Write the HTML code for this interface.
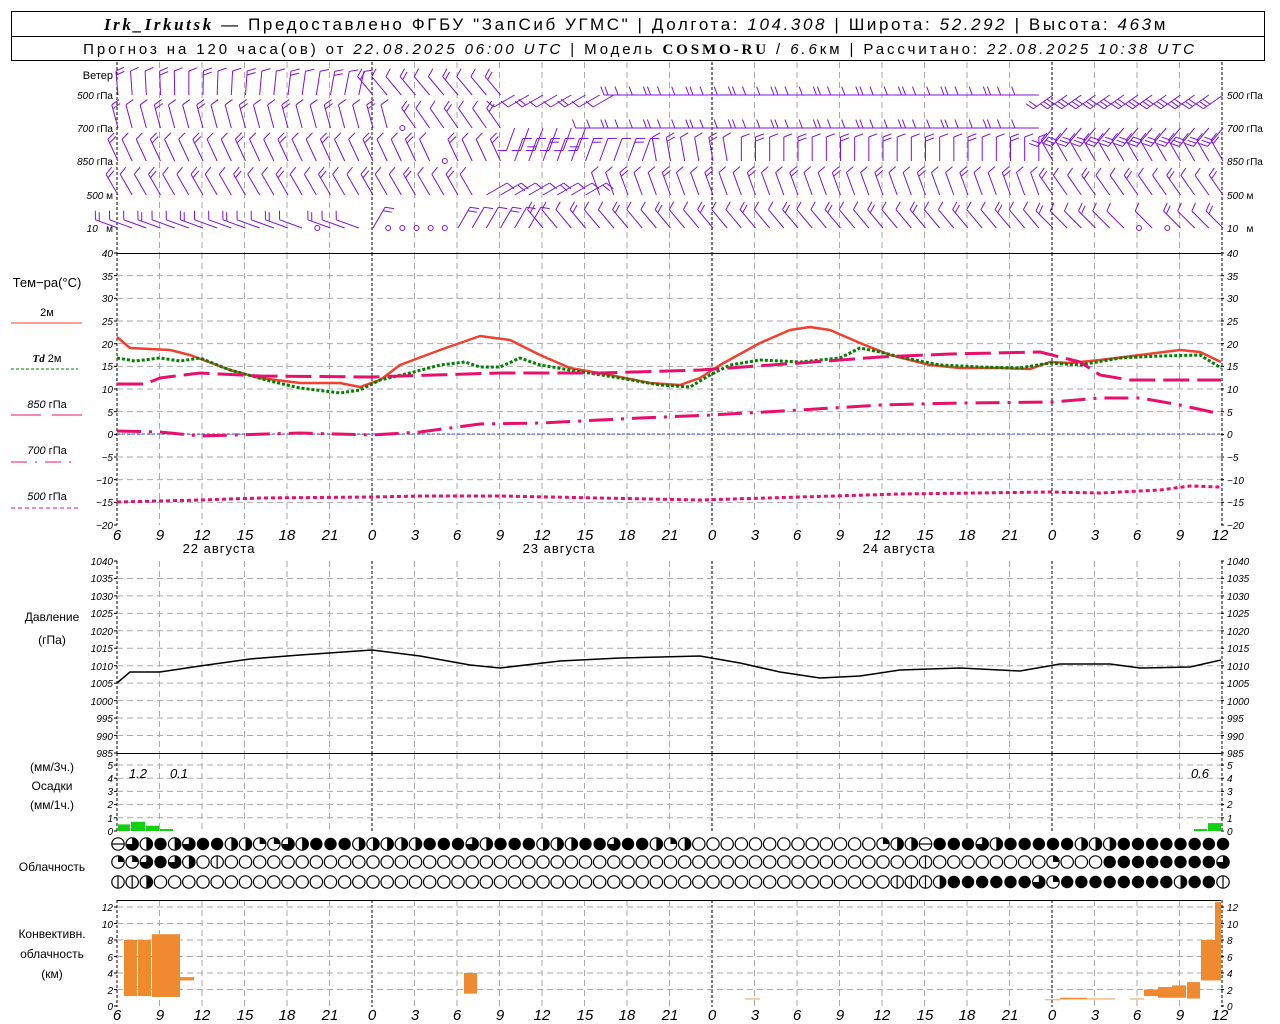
<!DOCTYPE html>
<html><head><meta charset="utf-8"><style>
html,body{margin:0;padding:0;background:#fff;width:1280px;height:1024px;overflow:hidden}
svg{display:block;font-family:"Liberation Sans",sans-serif}
.ax{font-size:10px;font-style:italic;fill:#000}
.hl{font-size:15px;font-style:italic}
.lb{font-size:12px;text-anchor:middle}
</style></head><body>
<svg id="s" width="1280" height="1024" viewBox="0 0 1280 1024" xmlns="http://www.w3.org/2000/svg">
<rect x="11.5" y="11.5" width="1253" height="49" fill="none" stroke="#000"/>
<line x1="11" y1="36.5" x2="1265" y2="36.5" stroke="#000"/>
<text x="636" y="30" text-anchor="middle" font-size="17" letter-spacing="2.6"><tspan font-family="Liberation Serif" font-style="italic" font-weight="bold">Irk_Irkutsk</tspan> — Предоставлено ФГБУ "ЗапСиб УГМС" | Долгота: <tspan font-style="italic">104.308</tspan> | Широта: <tspan font-style="italic">52.292</tspan> | Высота: <tspan font-style="italic">463</tspan>м</text>
<text x="640" y="54" text-anchor="middle" font-size="15" letter-spacing="2.9">Прогноз на 120 часа(ов) от <tspan font-style="italic">22.08.2025 06:00 UTC</tspan> | Модель <tspan font-family="Liberation Serif" font-weight="bold">COSMO-RU</tspan> / <tspan font-style="italic">6.6</tspan>км | Рассчитано: <tspan font-style="italic">22.08.2025 10:38 UTC</tspan></text>
<g id="g"></g>
<g font-size="10" text-anchor="end">
<text x="113" y="79" font-size="11">Ветер</text>
<text x="113" y="99"><tspan font-style="italic">500</tspan> гПа</text>
<text x="113" y="132"><tspan font-style="italic">700</tspan> гПа</text>
<text x="113" y="165"><tspan font-style="italic">850</tspan> гПа</text>
<text x="113" y="199"><tspan font-style="italic">500</tspan> м</text>
<text x="113" y="232"><tspan font-style="italic">10</tspan> &#160; м</text>
</g>
<g font-size="10">
<text x="1227" y="99"><tspan font-style="italic">500</tspan> гПа</text>
<text x="1227" y="132"><tspan font-style="italic">700</tspan> гПа</text>
<text x="1227" y="165"><tspan font-style="italic">850</tspan> гПа</text>
<text x="1227" y="199"><tspan font-style="italic">500</tspan> м</text>
<text x="1227" y="232"><tspan font-style="italic">10</tspan> &#160; м</text>
</g>
<g class="lb">
<text x="47" y="287" font-size="13">Тем−ра(°C)</text>
<text x="47" y="316" font-size="11">2м</text>
<text x="47" y="362" font-size="11"><tspan font-family="Liberation Serif" font-style="italic" font-weight="bold">Td</tspan>  2м</text>
<text x="47" y="408" font-size="11"><tspan font-style="italic">850</tspan> гПа</text>
<text x="47" y="454" font-size="11"><tspan font-style="italic">700</tspan> гПа</text>
<text x="47" y="500" font-size="11"><tspan font-style="italic">500</tspan> гПа</text>
<text x="52" y="621" font-size="12">Давление</text>
<text x="52" y="644" font-size="12">(гПа)</text>
<text x="52" y="771" font-size="12">(мм/3ч.)</text>
<text x="52" y="790" font-size="12">Осадки</text>
<text x="52" y="809" font-size="12">(мм/1ч.)</text>
<text x="52" y="871" font-size="12">Облачность</text>
<text x="52" y="938" font-size="12">Конвективн.</text>
<text x="52" y="958" font-size="12">облачность</text>
<text x="52" y="978" font-size="12">(км)</text>
</g>
<line x1="11" y1="323" x2="82" y2="323" stroke="#f04030" stroke-width="1"/>
<line x1="11" y1="369" x2="78" y2="369" stroke="#008000" stroke-dasharray="3,2"/>
<line x1="11" y1="415" x2="41" y2="415" stroke="#e8106c"/><line x1="52" y1="415" x2="82" y2="415" stroke="#e8106c"/>
<line x1="11" y1="462" x2="78" y2="462" stroke="#e8106c" stroke-dasharray="16,8,2,8"/>
<line x1="11" y1="508" x2="78" y2="508" stroke="#e8106c" stroke-dasharray="4,3"/>
<g class="ax" text-anchor="end">
<text x="113" y="257">40</text><text x="113" y="280">35</text><text x="113" y="302">30</text><text x="113" y="325">25</text><text x="113" y="348">20</text><text x="113" y="370">15</text><text x="113" y="393">10</text><text x="113" y="416">5</text><text x="113" y="438">0</text><text x="113" y="461">−5</text><text x="113" y="484">−10</text><text x="113" y="506">−15</text><text x="113" y="529">−20</text>
<text x="113" y="565">1040</text><text x="113" y="582">1035</text><text x="113" y="600">1030</text><text x="113" y="617">1025</text><text x="113" y="635">1020</text><text x="113" y="652">1015</text><text x="113" y="670">1010</text><text x="113" y="687">1005</text><text x="113" y="705">1000</text><text x="113" y="722">995</text><text x="113" y="740">990</text><text x="113" y="757">985</text>
<text x="113" y="769">5</text><text x="113" y="782">4</text><text x="113" y="795">3</text><text x="113" y="808">2</text><text x="113" y="822">1</text><text x="113" y="835">0</text>
<text x="113" y="911">12</text><text x="113" y="928">10</text><text x="113" y="944">8</text><text x="113" y="961">6</text><text x="113" y="977">4</text><text x="113" y="994">2</text><text x="113" y="1010">0</text>
</g>
<g class="ax">
<text x="1227" y="257">40</text><text x="1227" y="280">35</text><text x="1227" y="302">30</text><text x="1227" y="325">25</text><text x="1227" y="348">20</text><text x="1227" y="370">15</text><text x="1227" y="393">10</text><text x="1227" y="416">5</text><text x="1227" y="438">0</text><text x="1227" y="461">−5</text><text x="1227" y="484">−10</text><text x="1227" y="506">−15</text><text x="1227" y="529">−20</text>
<text x="1227" y="565">1040</text><text x="1227" y="582">1035</text><text x="1227" y="600">1030</text><text x="1227" y="617">1025</text><text x="1227" y="635">1020</text><text x="1227" y="652">1015</text><text x="1227" y="670">1010</text><text x="1227" y="687">1005</text><text x="1227" y="705">1000</text><text x="1227" y="722">995</text><text x="1227" y="740">990</text><text x="1227" y="757">985</text>
<text x="1227" y="769">5</text><text x="1227" y="782">4</text><text x="1227" y="795">3</text><text x="1227" y="808">2</text><text x="1227" y="822">1</text><text x="1227" y="835">0</text>
<text x="1227" y="911">12</text><text x="1227" y="928">10</text><text x="1227" y="944">8</text><text x="1227" y="961">6</text><text x="1227" y="977">4</text><text x="1227" y="994">2</text><text x="1227" y="1010">0</text>
</g>
<g class="hl" text-anchor="middle">
<text x="117" y="540">6</text><text x="160" y="540">9</text><text x="202" y="540">12</text><text x="245" y="540">15</text><text x="287" y="540">18</text><text x="330" y="540">21</text><text x="372" y="540">0</text><text x="415" y="540">3</text><text x="457" y="540">6</text><text x="500" y="540">9</text><text x="542" y="540">12</text><text x="585" y="540">15</text><text x="627" y="540">18</text><text x="670" y="540">21</text><text x="712" y="540">0</text><text x="755" y="540">3</text><text x="797" y="540">6</text><text x="840" y="540">9</text><text x="882" y="540">12</text><text x="925" y="540">15</text><text x="967" y="540">18</text><text x="1010" y="540">21</text><text x="1052" y="540">0</text><text x="1095" y="540">3</text><text x="1137" y="540">6</text><text x="1180" y="540">9</text><text x="1220" y="540">12</text>
<text x="117" y="1020">6</text><text x="160" y="1020">9</text><text x="202" y="1020">12</text><text x="245" y="1020">15</text><text x="287" y="1020">18</text><text x="330" y="1020">21</text><text x="372" y="1020">0</text><text x="415" y="1020">3</text><text x="457" y="1020">6</text><text x="500" y="1020">9</text><text x="542" y="1020">12</text><text x="585" y="1020">15</text><text x="627" y="1020">18</text><text x="670" y="1020">21</text><text x="712" y="1020">0</text><text x="755" y="1020">3</text><text x="797" y="1020">6</text><text x="840" y="1020">9</text><text x="882" y="1020">12</text><text x="925" y="1020">15</text><text x="967" y="1020">18</text><text x="1010" y="1020">21</text><text x="1052" y="1020">0</text><text x="1095" y="1020">3</text><text x="1137" y="1020">6</text><text x="1180" y="1020">9</text><text x="1220" y="1020">12</text>
</g>
<g font-size="13" text-anchor="middle" letter-spacing="1">
<text x="219" y="553">22 августа</text><text x="559" y="553">23 августа</text><text x="899" y="553">24 августа</text>
</g>
<g font-size="13" font-style="italic" text-anchor="middle">
<text x="138" y="778">1.2</text><text x="179" y="778">0.1</text><text x="1200" y="778">0.6</text>
</g>
</svg>
<script>
var g=document.getElementById('g'),NS='http://www.w3.org/2000/svg';
function el(t,a){var e=document.createElementNS(NS,t);for(var k in a)e.setAttribute(k,a[k]);g.appendChild(e);return e;}
function ln(x1,y1,x2,y2,s,w,d){var a={x1:x1,y1:y1,x2:x2,y2:y2,stroke:s,'stroke-width':w||1};if(d)a['stroke-dasharray']=d;el('line',a);}
var X0=117,X1=1221,H=14.1667;
function X(h){return X0+h*H;}
for(var k=0;k<=26;k++){var x=X0+42.5*k;var day=(k==6||k==14||k==22);var edge=(k==0||k==26);
 [[62,253],[253,525],[561,753],[753,831],[900,1007]].forEach(function(p){ln(x,p[0],x,p[1],(day||edge)?'#000':'#aaa',1,(day||edge)?'3,2':'6,4');});}
for(var i=1;i<12;i++){var y=253+22.667*i;ln(X0,y,X1,y,'#aaa',1,'6,4');}
for(var i=1;i<11;i++){var y=561+17.45*i;ln(X0,y,X1,y,'#aaa',1,'6,4');}
for(var i=0;i<5;i++){var y=765+13.2*i;ln(X0,y,X1,y,'#aaa',1,'6,4');}
for(var i=0;i<6;i++){var y=907+16.5*i;ln(X0,y,X1,y,'#aaa',1,'6,4');}
ln(X0,253.5,X1,253.5,'#000',1);ln(X0,753.5,X1,753.5,'#000',1);ln(X0,900.5,X1,900.5,'#000',1);
ln(X0,434,X1,434,'#3050ff',1,'3,2');
function ticks(y0,y1,n){for(var i=0;i<=n;i++){var y=y0+(y1-y0)*i/n;ln(X0-3,y,X0,y,'#000');ln(X1,y,X1+3,y,'#000');}}
ticks(253,525,12);ticks(561,753,11);ticks(765,831,5);ticks(907,1006,6);
function poly(pts,s,w,d){var p=pts.map(function(q){return q.join(',')}).join(' ');var a={points:p,fill:'none',stroke:s,'stroke-width':w,'stroke-linejoin':'round'};if(d)a['stroke-dasharray']=d;el('polyline',a);}
poly([[117,337],[130,348],[150,349],[170,350],[190,355],[230,370],[260,378],[300,383],[340,383],[360,387],[380,380],[400,365],[440,350],[480,336],[510,340],[540,355],[570,368],[610,375],[650,383],[680,385],[700,378],[720,365],[760,343],[790,330],[810,327],[830,330],[860,343],[890,355],[930,365],[960,368],[1000,368],[1030,369],[1050,362],[1070,363],[1100,360],[1140,355],[1180,350],[1200,352],[1221,362]],'#f04030',2.5);
poly([[117,358],[135,361],[160,358],[180,361],[200,358],[230,370],[270,381],[300,388],[340,393],[360,390],[380,380],[410,373],[440,365],[465,362],[480,367],[500,367],[520,358],[540,365],[570,370],[620,378],[660,385],[690,387],[710,375],[730,365],[760,360],[800,362],[840,358],[860,348],[880,352],[900,357],[940,365],[980,367],[1020,368],[1050,363],[1080,365],[1120,358],[1160,356],[1200,355],[1221,368]],'#008000',3,'3,2');
poly([[117,384],[145,384],[160,378],[200,373],[260,376],[372,377],[400,376],[500,373],[600,373],[700,370],[800,363],[880,357],[950,354],[1040,352],[1080,362],[1100,375],[1130,380],[1221,380]],'#e8106c',3,'26,8');
poly([[117,431],[160,432],[200,436],[300,433],[372,435],[420,432],[480,424],[540,423],[640,418],[712,415],[800,410],[880,405],[960,403],[1052,402],[1100,398],[1140,398],[1180,405],[1221,414]],'#e8106c',3,'24,8,3,8');
poly([[117,502],[200,500],[260,498],[372,497],[420,496],[500,496],[600,498],[700,500],[800,497],[900,494],[1050,492],[1100,493],[1160,490],[1190,486],[1221,487]],'#e8106c',3,'4,3');
poly([[117,683],[130,672],[160,672],[200,666],[250,659],[300,655],[372,650],[420,656],[470,665],[500,668],[560,661],[620,658],[700,656],[740,663],[780,672],[820,678],[860,676],[900,670],[960,668],[1020,671],[1060,664],[1110,664],[1140,668],[1190,667],[1221,660]],'#000',1.5);
[[118,130,.5],[131,145,.7],[146,159,.4],[160,173,.15],[1194,1207,.15],[1208,1221,.6]].forEach(function(b){var h=b[2]*13.2;el('rect',{x:b[0],y:831-h,width:b[1]-b[0],height:h,fill:'#10d010'});});
[[124,137,1.2,8],[138,151,1.2,8],[152,180,1.1,8.7],[180,194,3.1,3.5],[464,477,1.5,4],[745,760,.8,.9],[1045,1060,.7,.8],[1060,1087,.8,1.0],[1087,1115,.8,.9],[1130,1144,.8,.9],[1144,1158,1.2,2.0],[1158,1172,1.0,2.3],[1172,1186,1.0,2.5],[1187,1200,.9,2.9],[1201,1215,3.1,8],[1215,1221,3.1,12.6]].forEach(function(b){var y1=1006-b[3]*8.25,y2=1006-b[2]*8.25;el('rect',{x:b[0],y:y1,width:b[1]-b[0],height:y2-y1,fill:'#f08a30'});});
function z(n){return new Array(n+1).join('0');}
var rows=[
"53242344221132444222"+"224443244422244344212"+z(13)+"1225444324444422244444444",
"11343206"+z(49)+"6"+z(8)+"1"+"000"+"44444444"+"3",
"662"+z(52)+"666"+"2"+"444444"+"31"+"44444444"+"2"+"44"+"6"];
var cy=[844,862,882];
function circ(x,y,c){var r=6.2;
 if(c==4){el('circle',{cx:x,cy:y,r:r,fill:'#000'});return;}
 el('circle',{cx:x,cy:y,r:r,fill:'#fff',stroke:'#000','stroke-width':1.2});
 if(c==5)ln(x-r,y,x+r,y,'#000',1.2);
 if(c==6)ln(x,y-r,x,y+r,'#000',1.2);
 if(c==1)el('path',{d:'M'+x+','+y+'V'+(y-r)+'A'+r+','+r+' 0 0 1 '+(x+r)+','+y+'Z',fill:'#000'});
 if(c==2)el('path',{d:'M'+x+','+(y-r)+'A'+r+','+r+' 0 0 1 '+x+','+(y+r)+'Z',fill:'#000'});
 if(c==3)el('path',{d:'M'+x+','+(y-r)+'A'+r+','+r+' 0 1 1 '+(x-r)+','+y+'H'+x+'Z',fill:'#000'});}
for(var r=0;r<3;r++)for(var h=0;h<=78;h++){circ(X(h)+1,cy[r],+(rows[r][h]||0));}
var wy=[95,128,161,195,228];
function ang(r,h){
 if(r==0){if(h<18)return -5+h;if(h<28)return -40;if(h<36)return -120;if(h<66)return -90;return -125;}
 if(r==1){if(h<20)return -15;if(h<28)return -35;if(h<34)return 200;if(h<66)return -90;return -140;}
 if(r==2){if(h<28)return -25;if(h<38)return 20;if(h<66)return (h<44?-10:0);return -30;}
 if(r==3){if(h<26)return -30;if(h<34)return 60;if(h<66)return -20;return -35;}
 if(r==4){if(h<18)return -70;if(h<30)return 30;if(h<66)return -40;return -45;}}
var PC='#8010e0';
for(var r=0;r<5;r++)for(var h=0;h<=78;h++){
 if((r==1&&h==20)||(r==2&&h==23)||(r==4&&(h==14||h>=19&&h<=23)||(r==4&&h==72)||(r==4&&h==74))){el('circle',{cx:X(h)+2,cy:wy[r],r:2.5,fill:'none',stroke:PC});continue;}
 var a=ang(r,h)*Math.PI/180,L=24,x=X(h)+1,y=wy[r];
 var ex=x+Math.sin(a)*L,ey=y-Math.cos(a)*L;ln(x,y,ex,ey,PC,1);
 var nf=(r<2&&h>66)?3:(h%3==0?2:1);
 for(var f=0;f<nf;f++){var t=1-f*0.17,fx=x+Math.sin(a)*L*t,fy=y-Math.cos(a)*L*t;var b=a+Math.PI/2.6;ln(fx,fy,fx+Math.sin(b)*9,fy-Math.cos(b)*9,PC,1);}
}
</script>
</body></html>
